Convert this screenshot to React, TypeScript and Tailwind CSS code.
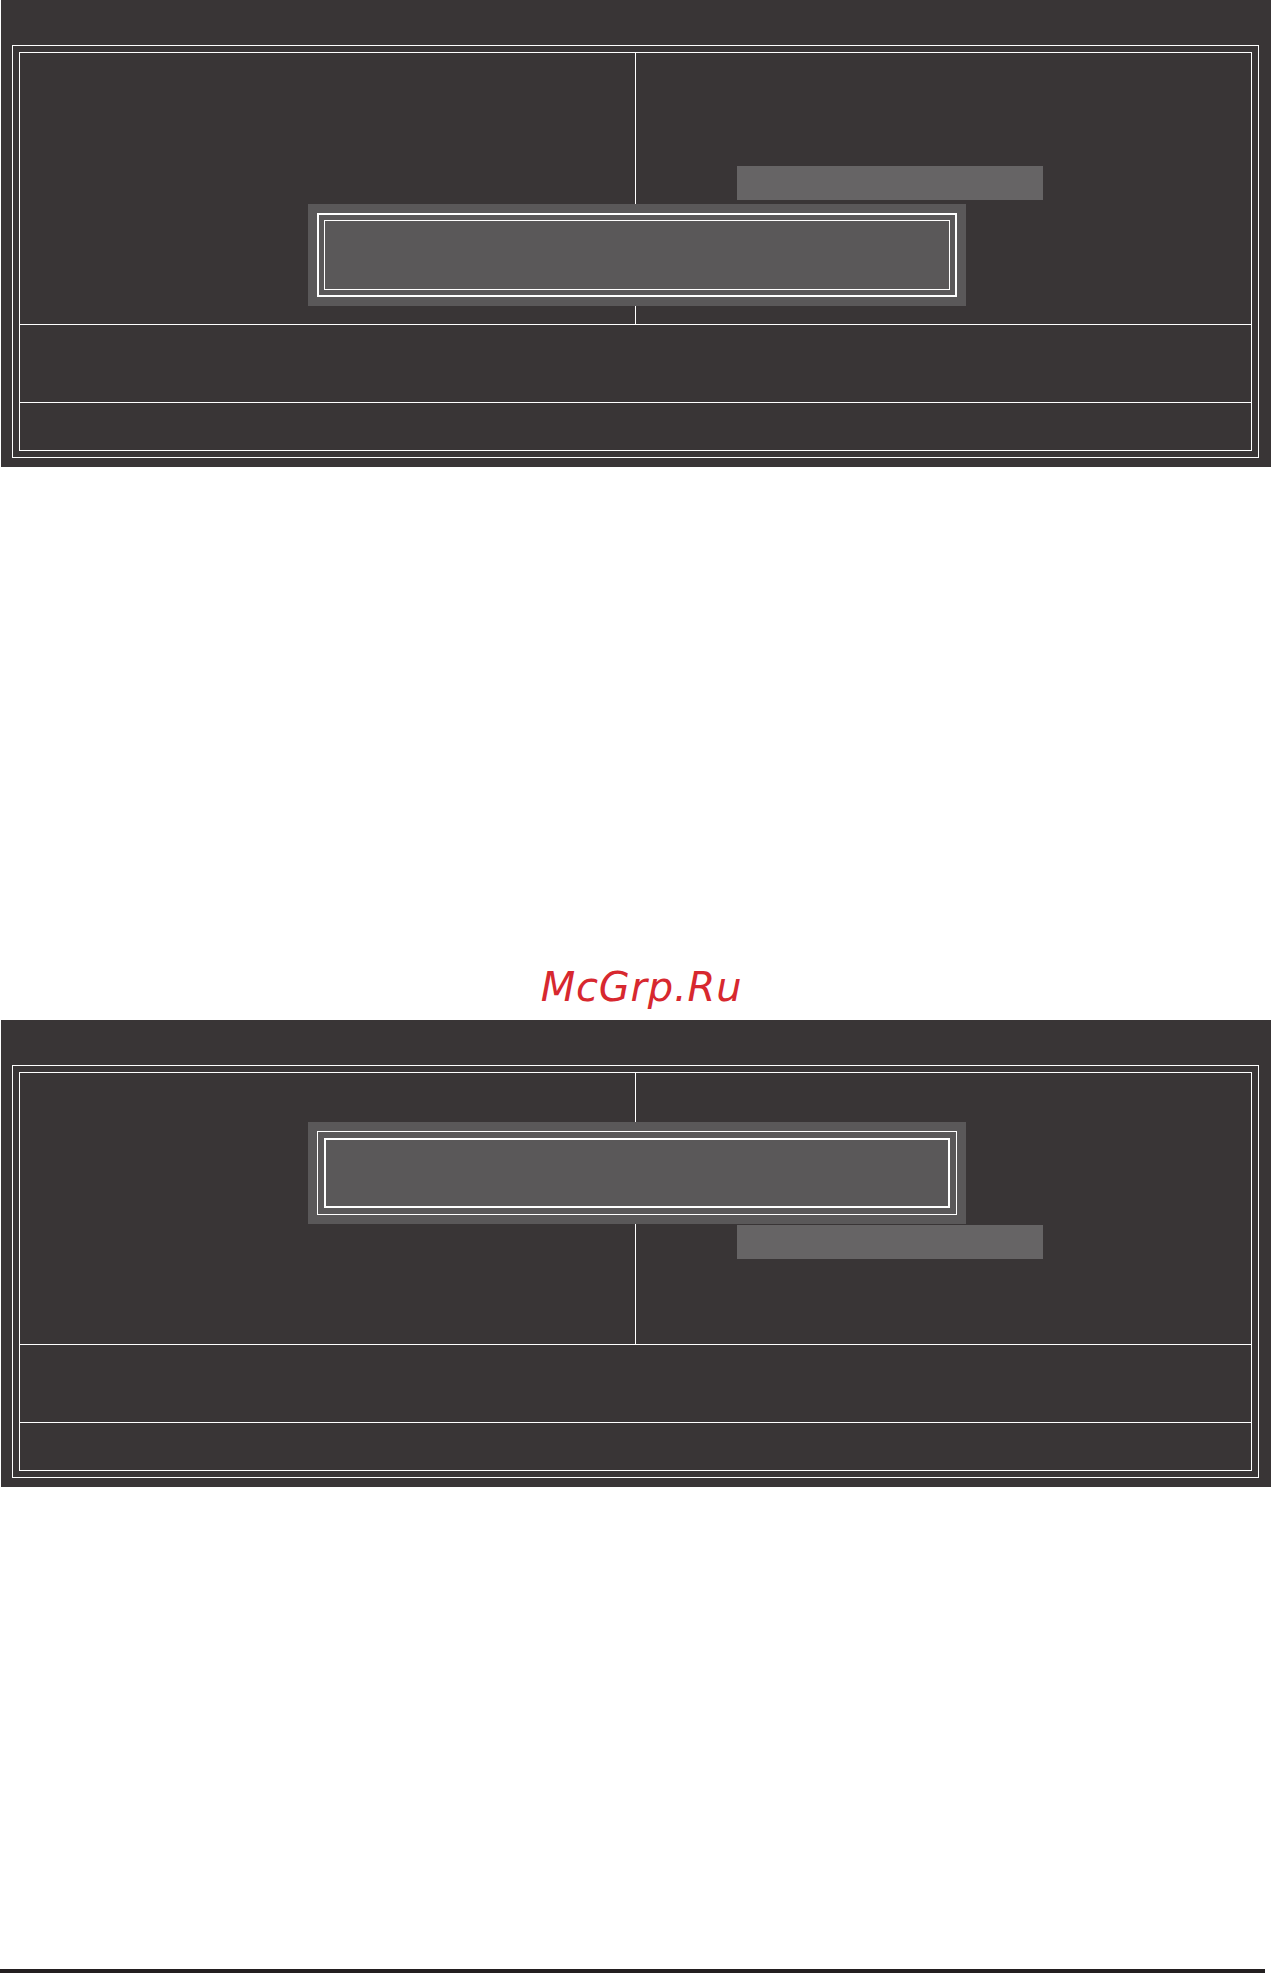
import React from "react";

type PanelProps = { variant: 1 | 2 };

function BiosPanel({ variant }: PanelProps) {
  const popupTop = variant === 1 ? "top-[204px]" : "top-[102px]";
  const highlightTop = variant === 1 ? "mt-[113px]" : "mt-[152px]";
  return (
    <div className="relative ml-[1px] h-[467px] bg-[#393536] pt-[45px] pl-[11px] pr-[12px]">
      <div className="h-[413px] border border-white p-[6px]">
        <div className="flex h-[399px] flex-col border border-white">
          <div className="grid h-[272px] grid-cols-[616px_1fr] border-b border-white">
            <div className="border-r border-white" />
            <div className="flex flex-col">
              <div className={`${highlightTop} ml-[101px] h-[34px] w-[306px] bg-[#666465]`} />
            </div>
          </div>
          <div className="h-[78px] border-b border-white" />
          <div className="flex-1" />
        </div>
      </div>
      <div className={`absolute left-[307px] ${popupTop} h-[102px] w-[658px] bg-[#5a5859] p-[9px]`}>
        <div
          className={`h-[84px] w-[640px] border-white ${
            variant === 1 ? "border-2 p-[5px]" : "border p-[6px]"
          }`}
        >
          <div
            className={`h-full w-full border-white ${variant === 1 ? "border" : "border-2"}`}
          />
        </div>
      </div>
    </div>
  );
}

export default function App() {
  return (
    <div className="relative h-[1973px] w-[1271px] overflow-hidden bg-white">
      <BiosPanel variant={1} />
      <div className="flex h-[553px] justify-center pt-[498px] pl-[12px]">
        <span
          className="text-[40px] italic leading-[45px] tracking-[0.8px] text-[#d7282f]"
          style={{ fontFamily: '"DejaVu Sans", "Noto Sans", sans-serif' }}
        >
          McGrp.Ru
        </span>
      </div>
      <BiosPanel variant={2} />
      <div className="h-[482px]" />
      <div className="mr-[6px] h-[4px] bg-[#231f20]" />
    </div>
  );
}
